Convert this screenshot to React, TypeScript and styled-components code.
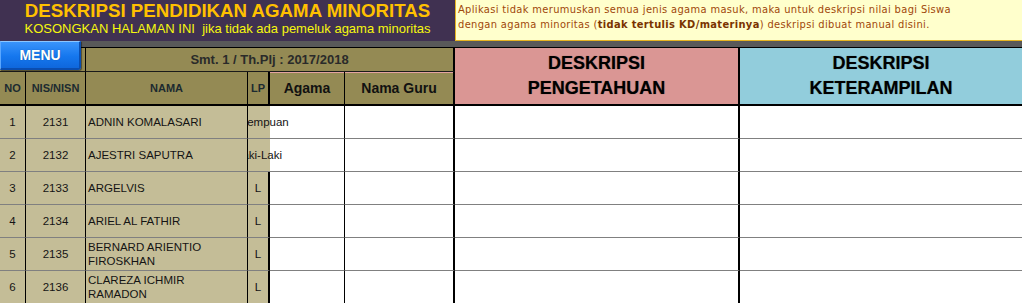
import React from "react";
import styled, { createGlobalStyle } from "styled-components";

const GlobalStyle = createGlobalStyle`
  html, body {
    margin: 0;
    padding: 0;
    background: #fff;
  }
  body {
    font-family: "Liberation Sans", Arial, sans-serif;
  }
`;

const students = [
  { no: 1, nis: "2131", nama: "ADNIN KOMALASARI", lp: "Perempuan" },
  { no: 2, nis: "2132", nama: "AJESTRI SAPUTRA", lp: "Laki-Laki" },
  { no: 3, nis: "2133", nama: "ARGELVIS", lp: "L" },
  { no: 4, nis: "2134", nama: "ARIEL AL FATHIR", lp: "L" },
  { no: 5, nis: "2135", nama: "BERNARD ARIENTIO FIROSKHAN", lp: "L" },
  { no: 6, nis: "2136", nama: "CLAREZA ICHMIR RAMADON", lp: "L" },
];

const App = () => {
  return (
    <>
      <GlobalStyle />
      <Page>
        <TopBar>
          <TitleBox>
            <Title>DESKRIPSI PENDIDIKAN AGAMA MINORITAS</Title>
            <Subtitle>KOSONGKAN HALAMAN INI&nbsp; jika tidak ada pemeluk agama minoritas</Subtitle>
          </TitleBox>
          <InfoBox>
            Aplikasi tidak merumuskan semua jenis agama masuk, maka untuk deskripsi nilai bagi Siswa
            <br />
            dengan agama minoritas (<b>tidak tertulis KD/materinya</b>) deskripsi dibuat manual disini.
          </InfoBox>
        </TopBar>
        <Strip />

        <Sheet>
          <SmtCell $col="1 / span 2" />
          <SmtCell $col="3 / span 4" $thick>
            Smt. 1 / Th.Plj : 2017/2018
          </SmtCell>
          <DescHead $col={7} $bg="#da9694">
            DESKRIPSI
            <br />
            PENGETAHUAN
          </DescHead>
          <DescHead $col={8} $bg="#92cddc" $last>
            DESKRIPSI
            <br />
            KETERAMPILAN
          </DescHead>

          <HeadCell $col={1}>NO</HeadCell>
          <HeadCell $col={2}>NIS/NISN</HeadCell>
          <HeadCell $col={3}>NAMA</HeadCell>
          <HeadCell $col={4} $thick>LP</HeadCell>
          <HeadCell $col={5} $big $pinkTop>Agama</HeadCell>
          <HeadCell $col={6} $big $pinkTop $thick>Nama Guru</HeadCell>

          {students.map((s) => {
            const spill = s.lp.length > 1;
            return (
              <React.Fragment key={s.no}>
                <BodyCell $tan>{s.no}</BodyCell>
                <BodyCell $tan>{s.nis}</BodyCell>
                <BodyCell $tan $left>
                  <NameText>{s.nama}</NameText>
                </BodyCell>
                {spill ? (
                  <SpillCell>{s.lp}</SpillCell>
                ) : (
                  <BodyCell $tan $thick>
                    {s.lp}
                  </BodyCell>
                )}
                <BodyCell />
                <BodyCell $thick />
                <BodyCell $thick />
                <BodyCell $last />
              </React.Fragment>
            );
          })}
        </Sheet>

        <MenuButton>MENU</MenuButton>
      </Page>
    </>
  );
};

export default App;

const Page = styled.div`
  position: relative;
  width: 1022px;
  height: 303px;
  overflow: hidden;
  background: #fff;
`;

const TopBar = styled.div`
  display: flex;
  height: 41px;
`;

const TitleBox = styled.div`
  width: 455px;
  box-sizing: border-box;
  padding-top: 1px;
  background: #403151;
  display: flex;
  flex-direction: column;
  align-items: center;
`;

const Title = styled.div`
  font-size: 18.7px;
  font-weight: bold;
  line-height: 20px;
  color: #ffc000;
  white-space: nowrap;
`;

const Subtitle = styled.div`
  font-size: 13px;
  line-height: 15px;
  color: #f6f70e;
  white-space: nowrap;
`;

const InfoBox = styled.div`
  flex: 1;
  box-sizing: border-box;
  padding: 2px 0 0 2px;
  background: #ffffcc;
  border-left: 1px solid #e6b422;
  border-bottom: 1px solid #e6b422;
  font-family: "DejaVu Sans Condensed", "DejaVu Sans", sans-serif;
  font-stretch: condensed;
  font-size: 11px;
  letter-spacing: 0.35px;
  line-height: 15px;
  color: #a0470a;
  white-space: nowrap;

  b {
    color: #7a3300;
  }
`;

const Strip = styled.div`
  height: 6px;
  background: #595959;
  border-bottom: 1px solid #000;
`;

const Sheet = styled.div`
  display: grid;
  grid-template-columns: 26px 60px 162px 22px 75px 110px 285px 282px;
  grid-template-rows: 24px 34px repeat(6, 33px);
`;

const SmtCell = styled.div<{ $col: string; $thick?: boolean }>`
  grid-row: 1;
  grid-column: ${(p) => p.$col};
  box-sizing: border-box;
  background: #948a54;
  border-right: ${(p) => (p.$thick ? 2 : 1)}px solid #000;
  border-bottom: 1px solid #1a1a1a;
  display: flex;
  align-items: center;
  justify-content: center;
  font-size: 13px;
  font-weight: bold;
  color: #2a2a2a;
`;

const DescHead = styled.div<{ $col: number; $bg: string; $last?: boolean }>`
  grid-row: 1 / span 2;
  grid-column: ${(p) => p.$col};
  box-sizing: border-box;
  background: ${(p) => p.$bg};
  border-right: ${(p) => (p.$last ? 0 : 2)}px solid #000;
  border-bottom: 2px solid #000;
  display: flex;
  align-items: center;
  justify-content: center;
  text-align: center;
  font-size: 18px;
  font-weight: bold;
  line-height: 25px;
  color: #000;
  text-shadow: 0 0 1px rgba(0, 0, 0, 0.45);
`;

const HeadCell = styled.div<{ $col: number; $thick?: boolean; $big?: boolean; $pinkTop?: boolean }>`
  grid-row: 2;
  grid-column: ${(p) => p.$col};
  box-sizing: border-box;
  background: #948a54;
  border-right: ${(p) => (p.$thick ? 2 : 1)}px solid #000;
  border-bottom: 2px solid #000;
  box-shadow: ${(p) => (p.$pinkTop ? "inset 0 1px 0 #e3a3a0" : "none")};
  display: flex;
  align-items: center;
  justify-content: center;
  font-size: ${(p) => (p.$big ? 14 : 11)}px;
  font-weight: bold;
  color: ${(p) => (p.$big ? "#111" : "#1c2a30")};
  white-space: nowrap;
`;

const BodyCell = styled.div<{ $tan?: boolean; $thick?: boolean; $left?: boolean; $last?: boolean }>`
  box-sizing: border-box;
  background: ${(p) => (p.$tan ? "#c4bd97" : "#fff")};
  border-right: ${(p) => (p.$last ? 0 : p.$thick ? 2 : 1)}px solid #000;
  border-bottom: 1px solid #808080;
  display: flex;
  align-items: center;
  justify-content: ${(p) => (p.$left ? "flex-start" : "center")};
  padding: ${(p) => (p.$left ? "0 6px 0 2px" : "0")};
  font-size: 11.5px;
  color: #141414;
  overflow: hidden;
`;

const NameText = styled.div`
  line-height: 14px;
`;

const SpillCell = styled.div`
  box-sizing: border-box;
  background: #c4bd97;
  border-bottom: 1px solid #808080;
  display: flex;
  align-items: center;
  justify-content: center;
  white-space: nowrap;
  font-size: 11.5px;
  color: #141414;
  clip-path: inset(0 -120px 0 0);
`;

const MenuButton = styled.div`
  position: absolute;
  top: 41px;
  left: 0;
  width: 81px;
  height: 29px;
  box-sizing: border-box;
  background: linear-gradient(#3a94fb, #1577ee 55%, #0f67dc);
  border-top: 1px solid #8cc6ff;
  border-left: 1px solid #5aa7ff;
  border-right: 2px solid #0a4db0;
  border-bottom: 2px solid #0a4db0;
  border-radius: 0 0 3px 0;
  box-shadow: 1px 1px 1px rgba(0, 0, 0, 0.45);
  display: flex;
  align-items: center;
  justify-content: center;
  font-size: 14px;
  font-weight: bold;
  color: #fff;
  text-shadow: 0 0 1px rgba(0, 0, 0, 0.4);
`;
